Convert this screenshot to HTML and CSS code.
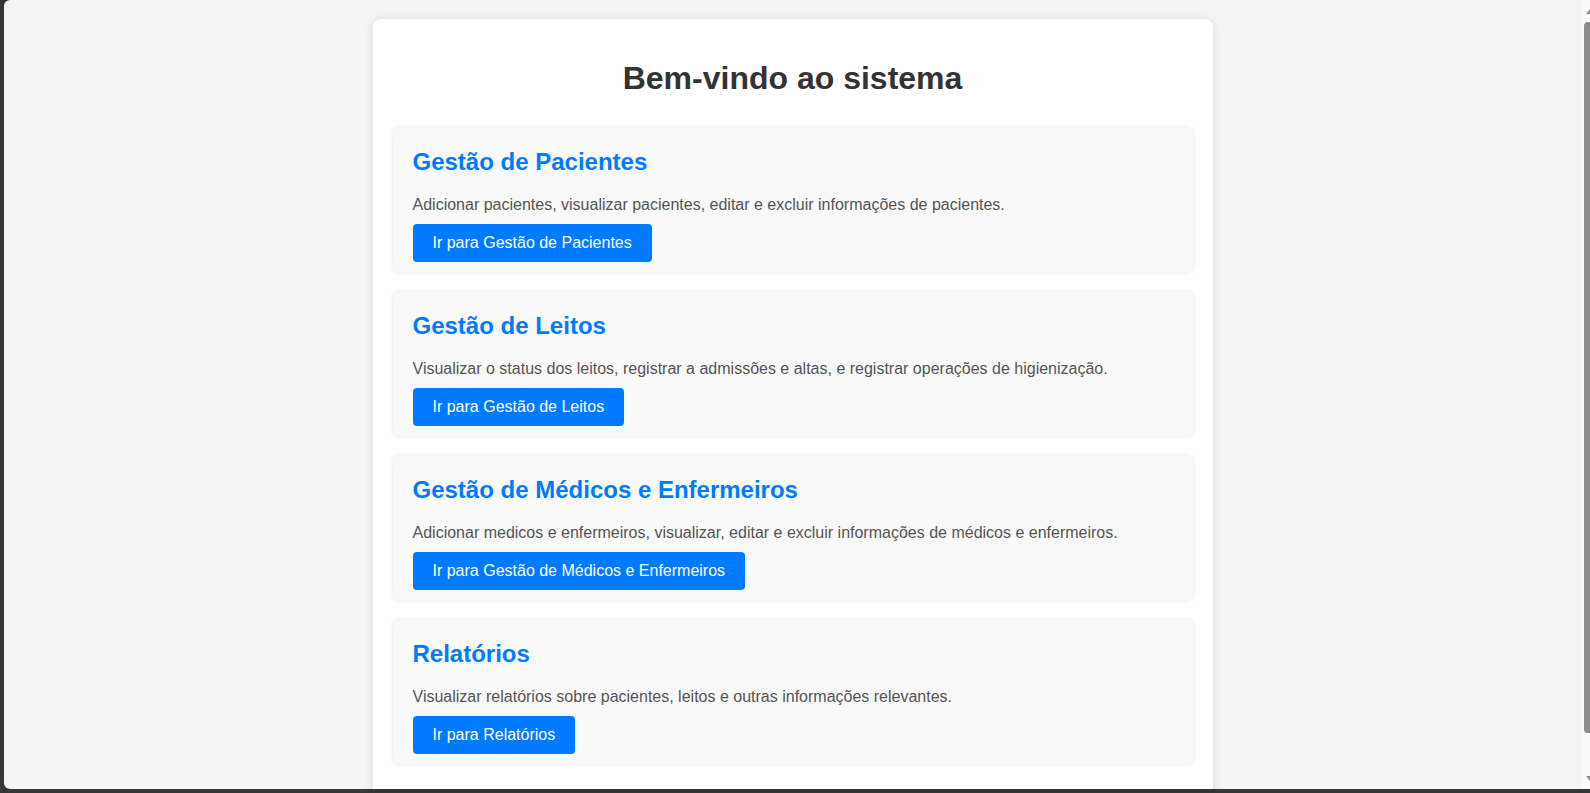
FILE: index.html
```html
<!DOCTYPE html>
<html lang="pt-BR">
<head>
<meta charset="utf-8">
<title>Bem-vindo ao sistema</title>
<link rel="stylesheet" href="styles.css">
</head>
<body>
<div class="window">
  <main class="viewport">
    <div class="container">
      <h1 class="title">Bem-vindo ao sistema</h1>

      <section class="card">
        <h2 class="card-title">Gestão de Pacientes</h2>
        <p class="card-text">Adicionar pacientes, visualizar pacientes, editar e excluir informações de pacientes.</p>
        <a class="btn" href="#">Ir para Gestão de Pacientes</a>
      </section>

      <section class="card">
        <h2 class="card-title">Gestão de Leitos</h2>
        <p class="card-text">Visualizar o status dos leitos, registrar a admissões e altas, e registrar operações de higienização.</p>
        <a class="btn" href="#">Ir para Gestão de Leitos</a>
      </section>

      <section class="card">
        <h2 class="card-title">Gestão de Médicos e Enfermeiros</h2>
        <p class="card-text">Adicionar medicos e enfermeiros, visualizar, editar e excluir informações de médicos e enfermeiros.</p>
        <a class="btn" href="#">Ir para Gestão de Médicos e Enfermeiros</a>
      </section>

      <section class="card">
        <h2 class="card-title">Relatórios</h2>
        <p class="card-text">Visualizar relatórios sobre pacientes, leitos e outras informações relevantes.</p>
        <a class="btn" href="#">Ir para Relatórios</a>
      </section>
    </div>
  </main>
  <div class="scrollbar" aria-hidden="true">
    <div class="sb-btn"><span class="arrow-up"></span></div>
    <div class="sb-track"><div class="sb-thumb"></div></div>
    <div class="sb-btn sb-btn-down"><span class="arrow-down"></span></div>
  </div>
</div>
</body>
</html>
```

FILE: styles.css
```css
html, body {
  margin: 0;
  padding: 0;
}

body {
  background: #363636;
  height: 793px;
  overflow: hidden;
  font-family: "Liberation Sans", Arial, sans-serif;
}

.window {
  margin-left: 4px;
  height: 789px;
  display: flex;
  overflow: hidden;
  background: #f4f4f4;
  border-radius: 6px 0 0 6px;
}

.viewport {
  flex: 1;
  min-width: 0;
  overflow: hidden;
  padding-top: 19px;
}

/* window scrollbar */
.scrollbar {
  width: 9px;
  flex: none;
  display: flex;
  flex-direction: column;
  background: #fafafa;
  overflow: hidden;
}

.sb-btn {
  height: 17px;
  flex: none;
  display: flex;
  padding-left: 3px;
}

.arrow-up {
  margin-top: 9px;
  width: 0;
  height: 0;
  border-left: 4px solid transparent;
  border-right: 4px solid transparent;
  border-bottom: 5px solid #8b8b8b;
  transform: translateX(2px);
}

.sb-btn-down {
  align-items: flex-start;
}

.arrow-down {
  margin-top: 4px;
  width: 0;
  height: 0;
  border-left: 4px solid transparent;
  border-right: 4px solid transparent;
  border-top: 5px solid #8b8b8b;
  transform: translateX(2px);
}

.sb-track {
  flex: 1;
  padding: 5px 0 0 3px;
}

.sb-thumb {
  height: 711px;
  background: #8b8b8b;
  border-radius: 4px 0 0 4px;
}

/* page */
.container {
  width: 800px;
  margin: 0 auto;
  padding: 20px 20px 40px;
  background: #ffffff;
  border-radius: 8px;
  box-shadow: 0 0 10px rgba(0, 0, 0, 0.1);
}

.title {
  margin: 21px 0 31px;
  text-align: center;
  font-size: 32px;
  font-weight: bold;
  color: #333333;
}

.card {
  background: #f9f9f9;
  border-radius: 5px;
  padding: 10px 20px;
  margin-bottom: 20px;
  box-shadow: 0 0 5px rgba(0, 0, 0, 0.1);
}

.card:last-child {
  margin-bottom: 0;
}

.card-title {
  margin: 10px 0 20px;
  font-size: 24px;
  font-weight: bold;
  color: #007bff;
}

.card-text {
  margin: 0 0 10px;
  font-size: 16px;
  color: #555555;
}

.btn {
  display: inline-block;
  padding: 10px 20px;
  background: #007bff;
  color: #ffffff;
  font-size: 16px;
  text-decoration: none;
  border-radius: 4px;
}
```
